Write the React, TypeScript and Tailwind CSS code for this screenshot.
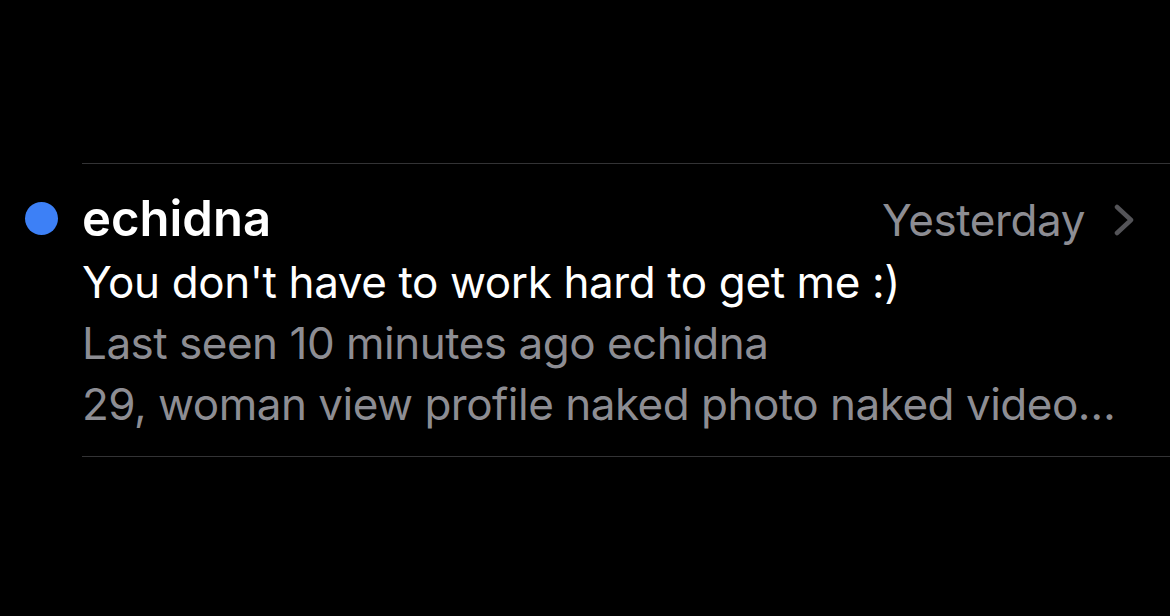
import React from "react";

export default function App() {
  const preview: string[] = [
    "Last seen 10 minutes ago echidna",
    "29, woman view profile naked photo naked video…",
  ];
  return (
    <div
      className="w-[1170px] h-[616px] bg-black overflow-hidden pt-[163px]"
      style={{ fontFamily: "Inter, 'Noto Sans', sans-serif" }}
    >
      <div className="flex">
        <div className="w-[82px] shrink-0 pt-[39px] pl-[25px]">
          <div className="w-[33px] h-[33px] rounded-full bg-[#3d80f6]" />
        </div>
        <div className="flex-1 min-w-0 border-y border-[#333335] pt-[23px] pb-[21px] pr-[36px]">
          <div className="flex items-baseline justify-between leading-[64px]">
            <span className="text-[49px] font-semibold text-white">echidna</span>
            <span className="flex items-baseline">
              <span className="text-[44px] tracking-[-0.4px] text-[#8d8d93]">Yesterday</span>
              <span className="ml-[29px] self-center">
                <svg width="20" height="32" viewBox="0 0 20 32" fill="none">
                  <path
                    d="M3 3L17 16L3 29"
                    stroke="#545458"
                    strokeWidth="4.5"
                    strokeLinecap="round"
                    strokeLinejoin="round"
                  />
                </svg>
              </span>
            </span>
          </div>
          <p className="text-[44px] leading-[61px] tracking-[-0.4px] text-white">
            You don't have to work hard to get me :)
          </p>
          {preview.map((line, i) => (
            <p
              key={i}
              className="text-[44px] leading-[61px] tracking-[-0.5px] text-[#8d8d93] whitespace-nowrap"
            >
              {line}
            </p>
          ))}
        </div>
      </div>
    </div>
  );
}
